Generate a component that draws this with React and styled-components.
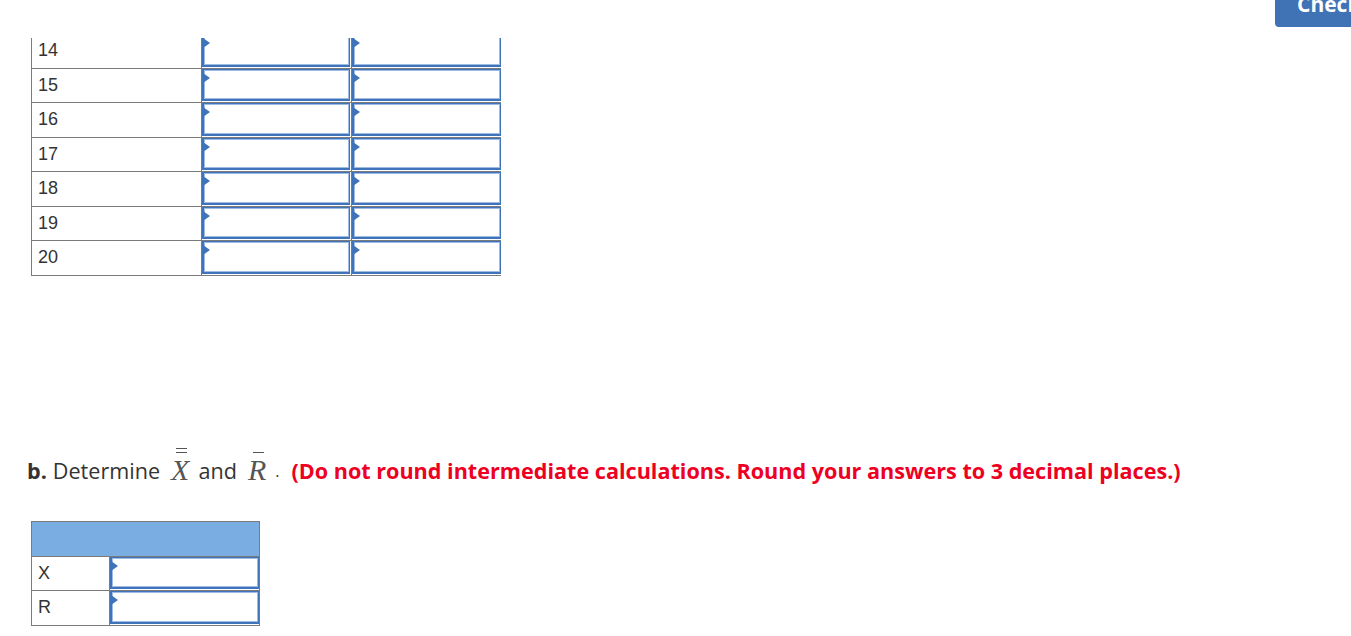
import styled, { createGlobalStyle } from "styled-components";

const GlobalStyle = createGlobalStyle`
  body {
    margin: 0;
    background: #fff;
    font-family: "Liberation Sans", Arial, sans-serif;
  }
`;

const rows = [14, 15, 16, 17, 18, 19, 20];

export default function App() {
  return (
    <>
      <GlobalStyle />
      <Page>
        <TopBar>
          <CheckButton>
            <span>Check</span>
          </CheckButton>
        </TopBar>
        <Scroller>
          <Content>
            <DataTable $cols="170px 150px 150px">
              {rows.map((n) => (
                <Row key={n}>
                  <LabelCell>{n}</LabelCell>
                  <InputCell>
                    <AnswerInput type="text" />
                  </InputCell>
                  <InputCell $last>
                    <AnswerInput type="text" />
                  </InputCell>
                </Row>
              ))}
            </DataTable>

            <Question>
              <b>b.</b> Determine <MathVar bars={2}>X</MathVar> and
              <MathVar bars={1}>R</MathVar>
              <Dot>.</Dot>
              <Hint>
                (Do not round intermediate calculations. Round your answers to
                3 decimal places.)
              </Hint>
            </Question>

            <DataTable $cols="78px 150px" $small>
              <HeaderRow />
              <Row>
                <LabelCell>X</LabelCell>
                <InputCell $last>
                  <AnswerInput type="text" />
                </InputCell>
              </Row>
              <Row>
                <LabelCell>R</LabelCell>
                <InputCell $last>
                  <AnswerInput type="text" />
                </InputCell>
              </Row>
            </DataTable>
          </Content>
        </Scroller>
      </Page>
    </>
  );
}

function MathVar({ bars, children }) {
  return (
    <MathWrap>
      <Bars>
        {Array.from({ length: bars }).map((_, i) => (
          <Bar key={i} />
        ))}
      </Bars>
      <MathLetter>{children}</MathLetter>
    </MathWrap>
  );
}

const Page = styled.div`
  display: flex;
  flex-direction: column;
  height: 636px;
  overflow: hidden;
`;

const TopBar = styled.header`
  height: 38px;
  flex: none;
  display: flex;
  justify-content: flex-end;
  align-items: flex-start;
  background: #fff;
  overflow: hidden;
`;

const CheckButton = styled.button`
  flex: none;
  display: flex;
  align-items: flex-start;
  height: 27px;
  width: 100px;
  margin: 0 -24px 0 0;
  border: 0;
  border-radius: 0 0 4px 4px;
  background: #3f73b6;
  color: #fff;
  font-family: "Open Sans", sans-serif;
  font-weight: 700;
  font-size: 21px;
  padding: 0 0 0 22px;
  white-space: nowrap;
  overflow: hidden;

  span {
    display: block;
    line-height: 14px;
    margin-top: -3px;
  }
`;

const Scroller = styled.main`
  flex: 1;
  overflow: hidden;
`;

const Content = styled.div`
  margin-top: -4px;
  padding-left: 31px;
  display: flex;
  flex-direction: column;
  align-items: flex-start;
`;

const DataTable = styled.div`
  display: grid;
  grid-template-columns: ${(p) => p.$cols};
  border-right: ${(p) => (p.$small ? "1px solid #7b7b7b" : "0")};
  border-top: ${(p) => (p.$small ? "1px solid #7b7b7b" : "0")};
`;

const Row = styled.div`
  display: contents;
`;

const HeaderRow = styled.div`
  grid-column: 1 / -1;
  height: 35px;
  background: #7aade1;
  border-left: 1px solid #7b7b7b;
  border-bottom: 1px solid #7b7b7b;
  box-sizing: border-box;
`;

const LabelCell = styled.div`
  height: 34.5px;
  box-sizing: border-box;
  border-left: 1px solid #7b7b7b;
  border-bottom: 1px solid #7b7b7b;
  padding-left: 6px;
  display: flex;
  align-items: center;
  font-size: 18px;
  color: #333;
`;

const InputCell = styled.div`
  position: relative;
  height: 34.5px;
  box-sizing: border-box;
  border-left: 1px solid #7b7b7b;
  border-bottom: 1px solid #7b7b7b;
  padding: 0 ${(p) => (p.$last ? "0" : "1px")} 1px 0;

  &::before {
    content: "";
    position: absolute;
    left: 1px;
    top: 4px;
    width: 0;
    height: 0;
    border-top: 5px solid transparent;
    border-bottom: 5px solid transparent;
    border-left: 7px solid #3f74bb;
  }
`;

const AnswerInput = styled.input`
  display: block;
  width: 100%;
  height: 100%;
  box-sizing: border-box;
  margin: 0;
  padding: 0;
  border: 1px solid #3f74bb;
  border-left-width: 2px;
  border-bottom-width: 2px;
  box-shadow: inset 0 0 0 1px #9dbbe4;
  background: #fff;
  outline: none;
`;

const Question = styled.p`
  margin: 172px 0 37px -4px;
  font-family: "Open Sans", sans-serif;
  font-size: 21.6px;
  line-height: 26px;
  color: #333;
  display: flex;
  align-items: flex-end;
  white-space: nowrap;

  b {
    font-weight: 700;
    margin-right: 6px;
  }
`;

const MathWrap = styled.span`
  display: inline-flex;
  flex-direction: column;
  align-items: center;
  margin: 0 9px 0 11px;
`;

const Bars = styled.span`
  display: flex;
  flex-direction: column;
  gap: 3px;
  margin-bottom: 4px;
  padding-left: 3px;
`;

const Bar = styled.span`
  display: block;
  width: 11px;
  height: 1px;
  background: #555;
`;

const MathLetter = styled.span`
  font-family: "Liberation Serif", serif;
  font-style: italic;
  font-size: 30px;
  line-height: 25px;
  margin-bottom: 2px;
  color: #555;
`;

const Dot = styled.span`
  margin-right: 12px;
  font-size: 16px;
`;

const Hint = styled.span`
  font-weight: 700;
  color: #ee0022;
`;
